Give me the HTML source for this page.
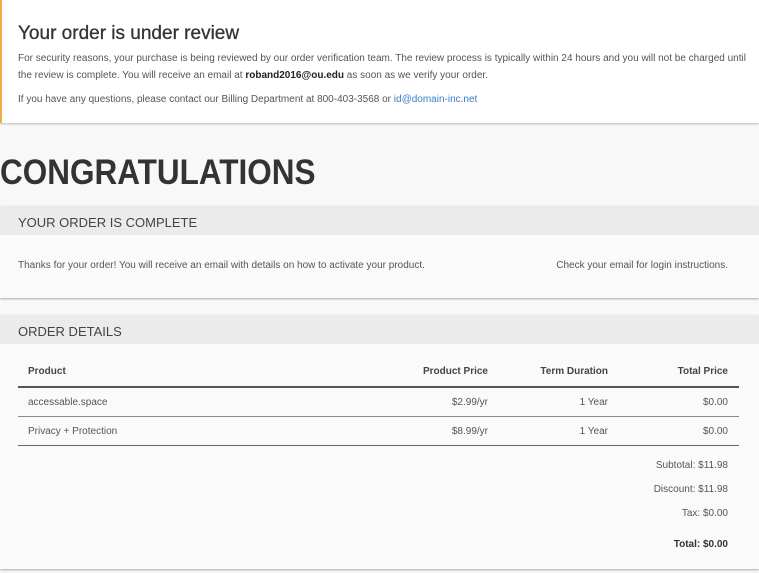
<!DOCTYPE html>
<html><head><style>
body{margin:0;width:759px;height:573px;overflow:hidden;background:#f8f8f8;font-family:"Liberation Sans",sans-serif;color:#555;}
.rev{position:absolute;left:0;top:0;width:759px;height:123px;background:#fff;border-left:2px solid #f0ad4e;box-sizing:border-box;box-shadow:0 1px 2px #bbb;}
.rev h2{position:absolute;left:16px;top:23px;margin:0;font-size:19px;font-weight:normal;color:#333;-webkit-text-stroke:0.3px #333;}
.rev p{position:absolute;left:16px;margin:0;font-size:10px;line-height:17px;width:730px;color:#555;}
.rev b{color:#222}
a{color:#3b7dc4;text-decoration:none}
h1{position:absolute;left:0;top:153px;margin:0;font-size:35px;font-weight:bold;color:#333;transform:scaleX(0.9);transform-origin:0 0;}
.sec{position:absolute;left:0;width:759px;background:#fafafa;box-shadow:0 1px 2px #aaa;}
.band{height:29px;background:#ebebeb;font-size:13px;color:#444;line-height:33px;padding-left:18px;}
.t{position:absolute;font-size:10px;color:#555}
.r{text-align:right}
.line{position:absolute;left:18px;width:721px;height:1px;background:#888}
</style></head><body>
<div class="rev">
<h2>Your order is under review</h2>
<p style="top:50px">For security reasons, your purchase is being reviewed by our order verification team. The review process is typically within 24 hours and you will not be charged until the review is complete. You will receive an email at <b>roband2016@ou.edu</b> as soon as we verify your order.</p>
<p style="top:91px">If you have any questions, please contact our Billing Department at 800-403-3568 or <a>id@domain-inc.net</a></p>
</div>
<h1>CONGRATULATIONS</h1>
<div class="sec" style="top:206px;height:92px">
<div class="band">YOUR ORDER IS COMPLETE</div>
<div class="t" style="left:18px;top:54px">Thanks for your order! You will receive an email with details on how to activate your product.</div>
<div class="t r" style="right:31px;top:54px">Check your email for login instructions.</div>
</div>
<div class="sec" style="top:315px;height:254px">
<div class="band">ORDER DETAILS</div>
<div class="t" style="left:28px;top:51px;font-weight:bold;color:#444">Product</div>
<div class="t r" style="right:271px;top:51px;font-weight:bold;color:#444">Product Price</div>
<div class="t r" style="right:151px;top:51px;font-weight:bold;color:#444">Term Duration</div>
<div class="t r" style="right:31px;top:51px;font-weight:bold;color:#444">Total Price</div>
<div class="line" style="top:71px;height:2px;background:#555"></div>
<div class="t" style="left:28px;top:82px">accessable.space</div>
<div class="t r" style="right:271px;top:82px">$2.99/yr</div>
<div class="t r" style="right:151px;top:82px">1 Year</div>
<div class="t r" style="right:31px;top:82px">$0.00</div>
<div class="line" style="top:101px"></div>
<div class="t" style="left:28px;top:111px">Privacy + Protection</div>
<div class="t r" style="right:271px;top:111px">$8.99/yr</div>
<div class="t r" style="right:151px;top:111px">1 Year</div>
<div class="t r" style="right:31px;top:111px">$0.00</div>
<div class="line" style="top:130px;background:#666"></div>
<div class="t r" style="right:31px;top:145px">Subtotal: $11.98</div>
<div class="t r" style="right:31px;top:169px">Discount: $11.98</div>
<div class="t r" style="right:31px;top:193px">Tax: $0.00</div>
<div class="t r" style="right:31px;top:224px;font-weight:bold;color:#333">Total: $0.00</div>
</div>
</body></html>
